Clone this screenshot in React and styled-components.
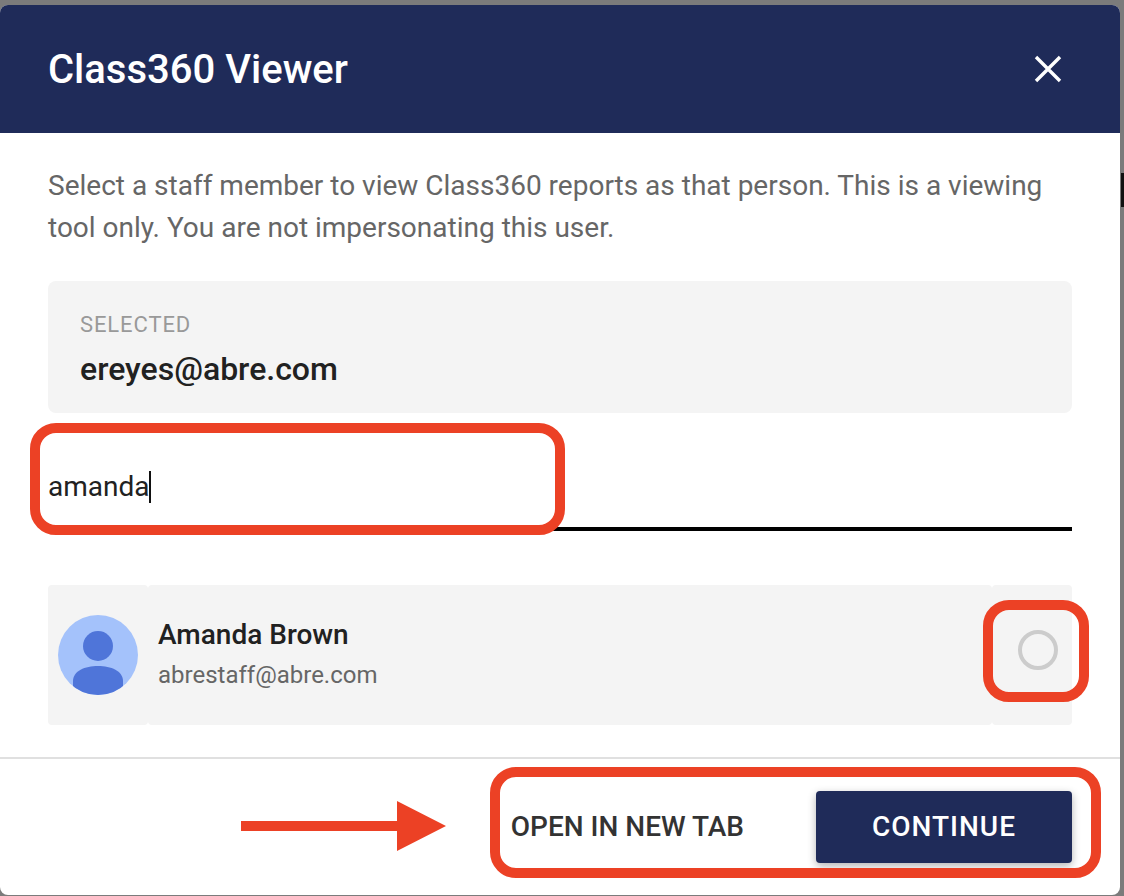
import React from 'react';
import styled, { createGlobalStyle } from 'styled-components';

const GlobalStyle = createGlobalStyle`
    html, body {
        margin: 0;
        padding: 0;
        background: #7b7b7b;
        font-family: 'Roboto', 'Liberation Sans', sans-serif;
    }
`

export default function App() {
    return (
        <Page>
            <GlobalStyle />
            <BackdropSliver />
            <Modal>
                <Header>
                    <Title>Class360 Viewer</Title>
                    <CloseIcon viewBox="0 0 28 28" aria-label="close">
                        <path d="M2 2 L26 26 M26 2 L2 26" stroke="#fff" strokeWidth="3.4" fill="none" />
                    </CloseIcon>
                </Header>

                <Body>
                    <Intro>
                        Select a staff member to view Class360 reports as that person. This is a viewing
                        <br />
                        tool only. You are not impersonating this user.
                    </Intro>

                    <SelectedBox>
                        <SelectedLabel>SELECTED</SelectedLabel>
                        <SelectedEmail>ereyes@abre.com</SelectedEmail>
                    </SelectedBox>

                    <SearchField>
                        amanda<Caret />
                    </SearchField>

                    <StaffRow>
                        <AvatarCell>
                            <Avatar viewBox="0 0 80 80">
                                <defs>
                                    <clipPath id="avatarClip">
                                        <circle cx="40" cy="40" r="40" />
                                    </clipPath>
                                </defs>
                                <circle cx="40" cy="40" r="40" fill="#a4c2fb" />
                                <g clipPath="url(#avatarClip)" fill="#4f75d9">
                                    <circle cx="40" cy="31" r="15" />
                                    <path d="M15 80 V66 C15 56 27 51 40 51 C53 51 65 56 65 66 V80 Z" />
                                </g>
                            </Avatar>
                        </AvatarCell>
                        <InfoCell>
                            <StaffName>Amanda Brown</StaffName>
                            <StaffEmail>abrestaff@abre.com</StaffEmail>
                        </InfoCell>
                        <RadioCell>
                            <Radio />
                        </RadioCell>
                    </StaffRow>
                </Body>

                <Footer>
                    <OpenLink>OPEN IN NEW TAB</OpenLink>
                    <ContinueButton>CONTINUE</ContinueButton>
                </Footer>

                <Callout $left={30} $top={418} $width={535} $height={112} />
                <Callout $left={983} $top={595} $width={106} $height={102} />
                <Callout $left={490} $top={762} $width={611} $height={111} />
                <Arrow viewBox="0 0 205 50">
                    <path d="M0 20 H156 V0 L205 25 L156 50 V30 H0 Z" fill="#ec4125" />
                </Arrow>
            </Modal>
        </Page>
    )
}

const Page = styled.div`
    position: relative;
    width: 1124px;
    height: 896px;
    padding-top: 5px;
    box-sizing: border-box;
    overflow: hidden;
`

const BackdropSliver = styled.div`
    position: absolute;
    right: 0;
    top: 173px;
    width: 3px;
    height: 34px;
    background: #111;
`

const Modal = styled.div`
    position: relative;
    width: 1120px;
    height: 890px;
    display: flex;
    flex-direction: column;
    background: #fff;
    border-radius: 8px;
`

const Header = styled.header`
    height: 128px;
    flex-shrink: 0;
    display: flex;
    align-items: center;
    justify-content: space-between;
    padding: 0 58px 0 48px;
    background: #1f2b59;
    border-radius: 8px 8px 0 0;
`

const Title = styled.h1`
    margin: 0;
    padding-top: 2px;
    font-size: 40px;
    font-weight: 500;
    line-height: 48px;
    color: #fff;
`

const CloseIcon = styled.svg`
    width: 28px;
    height: 28px;
`

const Body = styled.div`
    flex: 1;
    padding: 32px 48px 0;
`

const Intro = styled.p`
    margin: 0 0 32px;
    font-size: 28px;
    line-height: 42px;
    color: #666;
    white-space: nowrap;
`

const SelectedBox = styled.div`
    height: 132px;
    box-sizing: border-box;
    padding: 30px 32px 0;
    background: #f4f4f4;
    border-radius: 8px;
`

const SelectedLabel = styled.div`
    font-size: 22px;
    line-height: 28px;
    letter-spacing: 0.9px;
    color: #999;
`

const SelectedEmail = styled.div`
    margin-top: 10px;
    font-size: 32px;
    font-weight: 500;
    line-height: 40px;
    color: #212121;
`

const SearchField = styled.div`
    height: 118px;
    box-sizing: border-box;
    display: flex;
    align-items: center;
    padding-top: 33px;
    border-bottom: 4px solid #000;
    font-size: 28px;
    color: #212121;
`

const Caret = styled.span`
    display: inline-block;
    width: 2px;
    height: 32px;
    margin-left: -1px;
    background: #111;
`

const StaffRow = styled.div`
    margin-top: 54px;
    height: 140px;
    display: flex;
`

const AvatarCell = styled.div`
    width: 100px;
    display: flex;
    align-items: center;
    padding-left: 10px;
    box-sizing: border-box;
    background: #f4f4f4;
    border-radius: 4px;
`

const Avatar = styled.svg`
    width: 80px;
    height: 80px;
`

const InfoCell = styled.div`
    flex: 1;
    padding: 30px 0 0 10px;
    background: #f4f4f4;
    border-radius: 4px;
`

const StaffName = styled.div`
    font-size: 28px;
    font-weight: 500;
    line-height: 40px;
    color: #212121;
`

const StaffEmail = styled.div`
    font-size: 24px;
    line-height: 40px;
    color: #666;
`

const RadioCell = styled.div`
    width: 80px;
    display: flex;
    align-items: center;
    justify-content: center;
    padding: 0 0 10px 12px;
    box-sizing: border-box;
    background: #f4f4f4;
    border-radius: 4px;
`

const Radio = styled.div`
    width: 40px;
    height: 40px;
    box-sizing: border-box;
    border: 4px solid #ccc;
    border-radius: 50%;
`

const Footer = styled.footer`
    height: 138px;
    flex-shrink: 0;
    box-sizing: border-box;
    display: flex;
    align-items: center;
    justify-content: flex-end;
    gap: 72px;
    padding: 0 48px 0 0;
    border-top: 2px solid #e0e0e0;
`

const OpenLink = styled.span`
    padding-bottom: 2px;
    font-size: 28px;
    font-weight: 500;
    color: #333;
`

const ContinueButton = styled.button`
    width: 256px;
    height: 72px;
    padding: 0 0 2px;
    border: none;
    border-radius: 4px;
    background: #1f2b59;
    color: #fff;
    font-family: inherit;
    font-size: 28px;
    font-weight: 500;
    letter-spacing: 1px;
    box-shadow: 0 3px 8px rgba(0, 0, 0, 0.3);
`

const Callout = styled.div`
    position: absolute;
    left: ${props => props.$left}px;
    top: ${props => props.$top}px;
    width: ${props => props.$width}px;
    height: ${props => props.$height}px;
    box-sizing: border-box;
    border: 10px solid #ec4125;
    border-radius: 26px;
`

const Arrow = styled.svg`
    position: absolute;
    left: 241px;
    top: 796px;
    width: 205px;
    height: 50px;
`
